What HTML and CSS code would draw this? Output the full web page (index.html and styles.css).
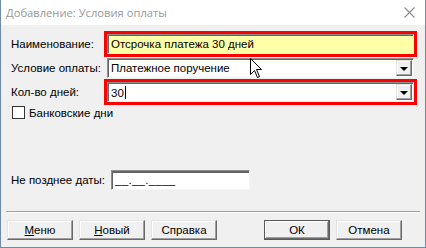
FILE: index.html
```html
<!DOCTYPE html>
<html lang="ru">
<head>
<meta charset="utf-8">
<title>Добавление: Условия оплаты</title>
<link rel="stylesheet" href="styles.css">
</head>
<body>
<div class="window">
  <div class="titlebar">
    <span class="title">Добавление: Условия оплаты</span>
    <svg class="close" width="11" height="11" viewBox="0 0 11 11"><path d="M0.5 0.5L10.5 10.5M10.5 0.5L0.5 10.5" stroke="#8a8a8a" stroke-width="1.1" fill="none"/></svg>
  </div>
  <div class="content">
    <div class="form">
      <label class="lbl">Наименование:</label>
      <div class="field input yellow hl"><span>Отсрочка платежа 30 дней</span></div>
      <label class="lbl">Условие оплаты:</label>
      <div class="field input combo"><span>Платежное поручение</span><span class="dd"><i></i></span></div>
      <label class="lbl">Кол-во дней:</label>
      <div class="field input combo hl"><span>30<b class="caret"></b></span><span class="dd"><i></i></span></div>
    </div>
    <div class="check"><span class="box"></span><span>Банковские дни</span></div>
    <div class="daterow">
      <label class="lbl">Не позднее даты:</label>
      <div class="input date"><span>__.__.____</span></div>
    </div>
  </div>
  <div class="footer">
    <div class="sep"></div>
    <div class="buttons">
      <div class="group">
        <div class="btn"><u>М</u>еню</div>
        <div class="btn"><u>Н</u>овый</div>
        <div class="btn">Справка</div>
      </div>
      <div class="group">
        <div class="btn default">ОК</div>
        <div class="btn">Отмена</div>
      </div>
    </div>
  </div>
  <svg class="cursor" width="13" height="21" viewBox="0 0 13 21"><path d="M0.5 0.5V16.5L4.5 12.5L7.5 19.5L9.5 18.5L6.5 11.5H11.5Z" fill="#fff" stroke="#000" stroke-width="1" stroke-linejoin="miter"/></svg>
</div>
</body>
</html>
```
FILE: styles.css
```css
html, body {
  margin: 0;
  padding: 0;
  background: #f0f0f0;
}
body {
  font-family: "Liberation Sans", Arial, sans-serif;
  font-size: 11.5px;
  color: #000;
}
.window {
  position: relative;
  width: 426px;
  height: 248px;
  box-sizing: border-box;
  border: 1px solid #6f8aa6;
  border-top: none;
  background: #f0f0f0;
  display: flex;
  flex-direction: column;
}
.titlebar {
  height: 25px;
  background: #fff;
  display: flex;
  align-items: center;
  justify-content: space-between;
  padding: 0 10px 0 5px;
  color: #999;
  font-family: "Open Sans", "Noto Sans", sans-serif;
  font-size: 11.2px;
}
.close {
  display: block;
}
.content {
  padding: 9px 10px 0 10px;
}
.form {
  display: grid;
  grid-template-columns: 96px 307px;
  grid-auto-rows: 20px;
  row-gap: 4px;
  align-items: center;
}
.lbl {
  line-height: 14px;
}
.input {
  box-sizing: border-box;
  height: 20px;
  background: #fff;
  border: 1px solid;
  border-color: #8e8e8e #f4f4f4 #f4f4f4 #8e8e8e;
  box-shadow: inset 1px 1px 0 #646464;
  display: flex;
  align-items: center;
  padding-left: 3px;
  white-space: nowrap;
  overflow: hidden;
}
.yellow {
  background: #ffffa8;
}
.hl {
  outline: 3px solid #f00;
  outline-offset: 0;
}
.combo {
  justify-content: space-between;
  padding-right: 1px;
}
.dd {
  box-sizing: border-box;
  width: 16px;
  height: 16px;
  background: #f0f0f0;
  border: 1px solid;
  border-color: #e3e3e3 #696969 #696969 #e3e3e3;
  box-shadow: inset -1px -1px 0 #a0a0a0, inset 1px 1px 0 #fff;
  display: flex;
  align-items: center;
  justify-content: center;
}
.dd i {
  width: 0;
  height: 0;
  border-left: 4px solid transparent;
  border-right: 4px solid transparent;
  border-top: 4px solid #000;
  margin-top: 1px;
}
.caret {
  display: inline-block;
  width: 1px;
  height: 13px;
  background: #000;
  vertical-align: -2px;
  margin-left: 1px;
}
.check {
  display: flex;
  align-items: center;
  gap: 4px;
  margin-top: 4px;
  padding-left: 1px;
}
.box {
  box-sizing: border-box;
  width: 13px;
  height: 13px;
  background: #fff;
  border: 1px solid #333;
}
.daterow {
  display: flex;
  align-items: center;
  margin-top: 51px;
}
.daterow .lbl {
  width: 100px;
}
.date {
  width: 139px;
  letter-spacing: 0.3px;
  box-shadow: inset 1px 1px 0 #646464, inset 0 2px 0 #646464;
}
.footer {
  margin-top: auto;
  padding: 0 5px 7px 5px;
}
.sep {
  height: 1px;
  background: #a0a0a0;
  border-bottom: 1px solid #fff;
  margin-bottom: 7px;
}
.buttons {
  display: flex;
  justify-content: space-between;
  padding: 0 18px 0 1px;
}
.group {
  display: flex;
  gap: 6px;
}
.btn {
  box-sizing: border-box;
  width: 66px;
  height: 20px;
  background: #f0f0f0;
  border: 1px solid;
  border-color: #e3e3e3 #696969 #696969 #e3e3e3;
  box-shadow: inset -1px -1px 0 #a0a0a0, inset 1px 1px 0 #fff;
  display: flex;
  align-items: center;
  justify-content: center;
}
.btn.default {
  border-color: #5a5a5a;
  box-shadow: inset -1px -1px 0 #696969, inset 1px 1px 0 #fff, inset -2px -2px 0 #a0a0a0;
}
.cursor {
  position: absolute;
  left: 249px;
  top: 58px;
}
```
